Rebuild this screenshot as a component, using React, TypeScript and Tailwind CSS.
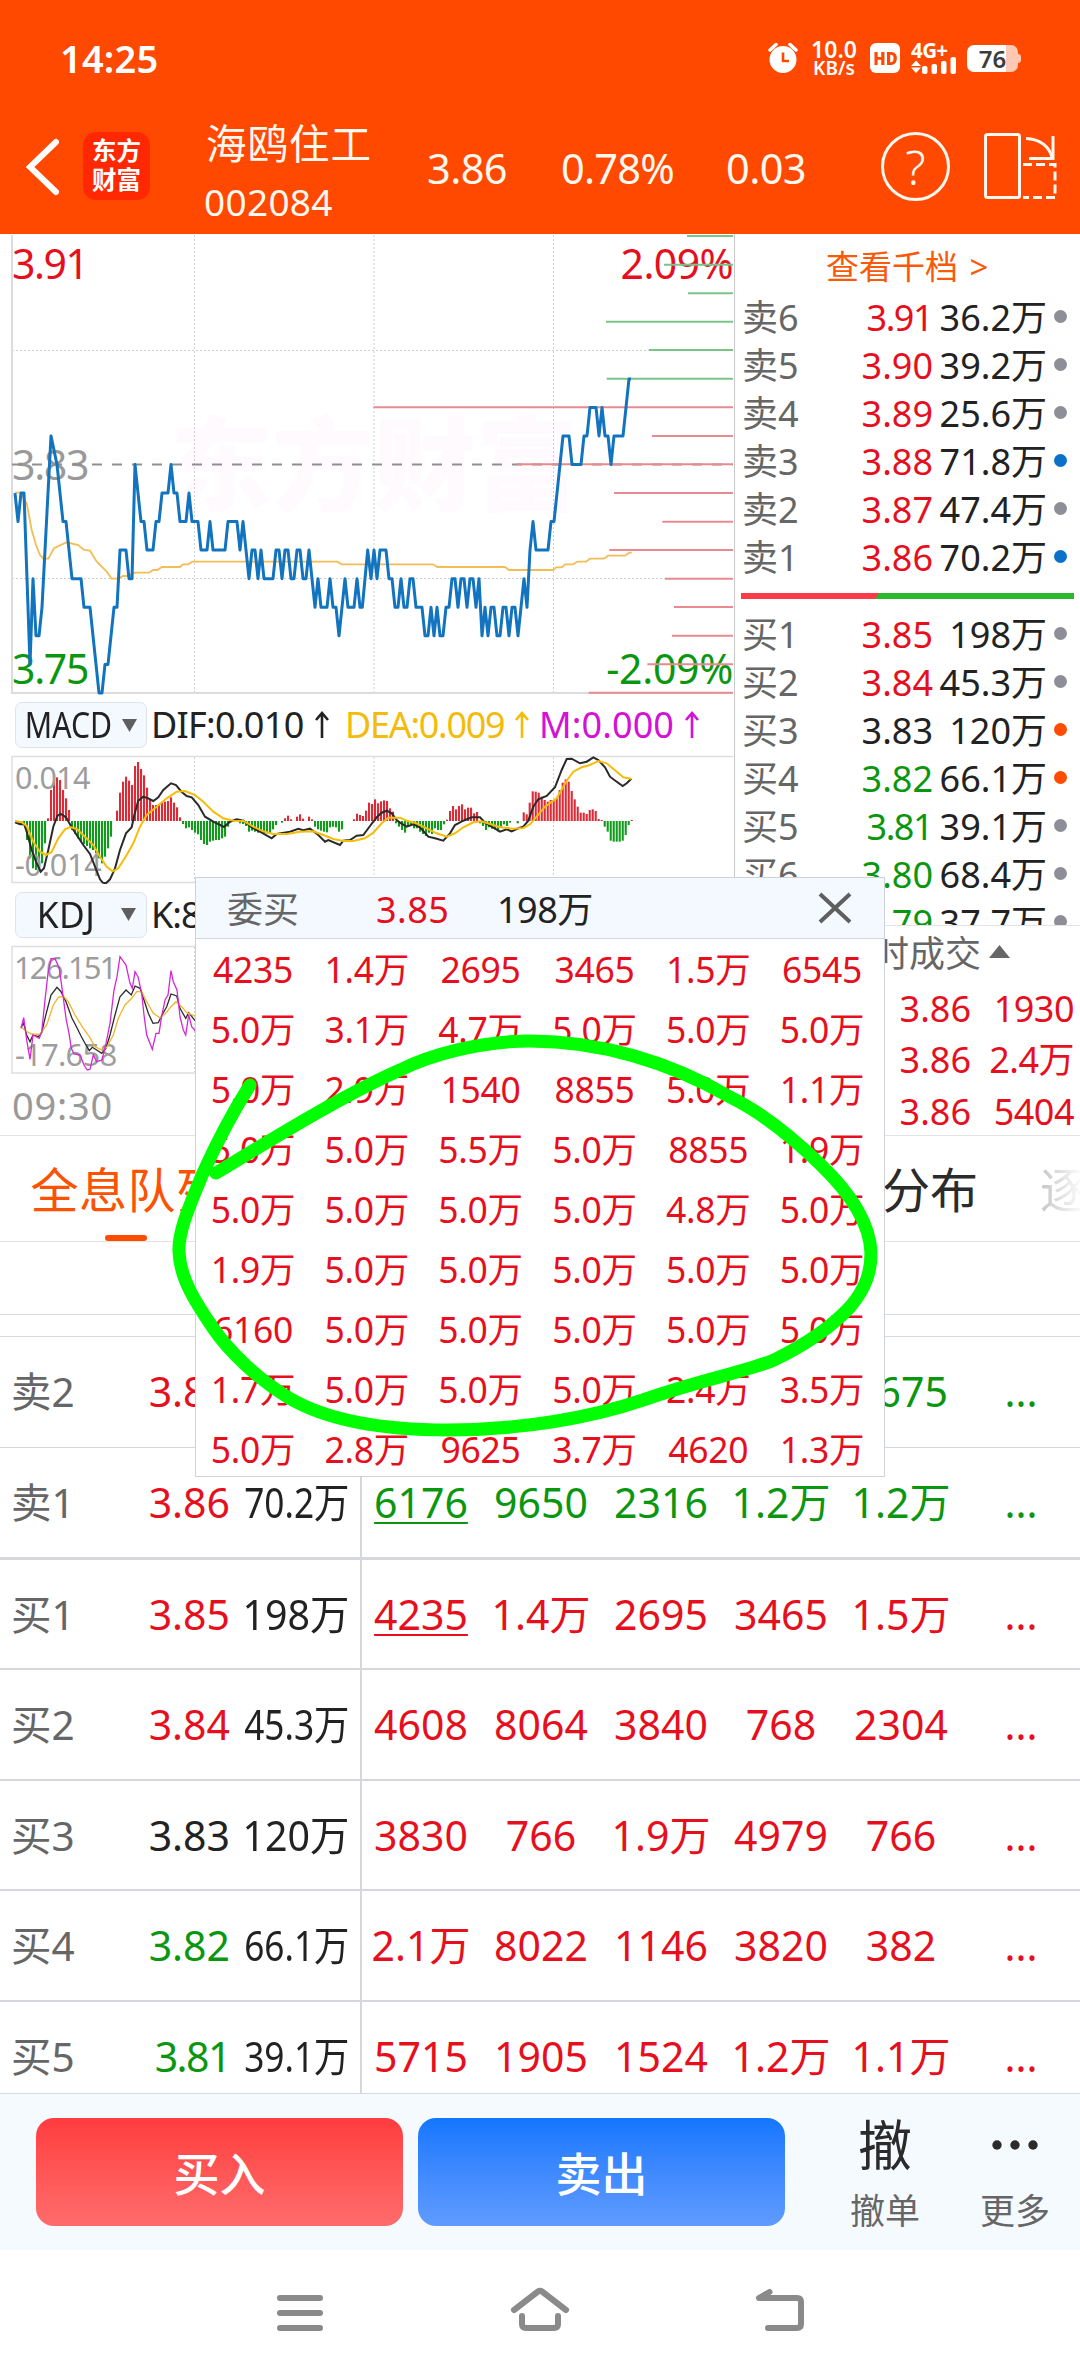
import React from "react";

const RED = "text-[#e60f1e]";
const GREEN = "text-[#0a970f]";
const DARK = "text-[#222222]";
const FONT = "font-['Noto_Sans','Noto_Sans_CJK_SC',sans-serif]";

/* ---------- chart data: x in thirds of a pixel, price in cents above 3.00 ---------- */
const price: [number, number][] = [
  [45, 82], [54, 81], [63, 82], [72, 82], [81, 79], [90, 76], [99, 79], [108, 77], [117, 77], [126, 78], [153, 84],
  [171, 83], [189, 81], [198, 81], [216, 79], [243, 79], [252, 78], [270, 78], [279, 77], [288, 76], [297, 75],
  [306, 75], [315, 76], [324, 76], [342, 78], [351, 78], [360, 80], [378, 80], [387, 79], [396, 79], [405, 83],
  [414, 82], [423, 81], [432, 81], [441, 80], [459, 80], [468, 81], [477, 81], [486, 82], [504, 82], [513, 83],
  [522, 82], [531, 82], [540, 81], [558, 81], [567, 82], [576, 81], [594, 81], [603, 80], [621, 80], [630, 81],
  [639, 80], [675, 80], [684, 81], [711, 81], [720, 80], [729, 81], [738, 80], [747, 79], [756, 80], [765, 80],
  [774, 79], [783, 80], [792, 79], [819, 79], [828, 80], [837, 80], [846, 79], [855, 80], [864, 80], [873, 79],
  [882, 79], [891, 80], [900, 80], [909, 79], [918, 79], [927, 80], [945, 78], [954, 79], [963, 78], [981, 78],
  [990, 79], [999, 78], [1008, 78], [1017, 77], [1035, 79], [1044, 78], [1062, 78], [1071, 79], [1080, 78],
  [1087, 78], [1103, 80], [1113, 79], [1122, 80], [1131, 79], [1140, 80], [1158, 80], [1167, 79], [1176, 79],
  [1185, 78], [1194, 78], [1203, 79], [1212, 78], [1221, 78], [1230, 79], [1239, 79], [1248, 78], [1266, 78],
  [1275, 77], [1284, 77], [1293, 78], [1302, 77], [1311, 78], [1320, 77], [1329, 77], [1338, 78], [1347, 78],
  [1356, 79], [1365, 79], [1374, 78], [1383, 79], [1392, 79], [1401, 78], [1410, 79], [1419, 79], [1428, 78],
  [1437, 79], [1446, 77], [1455, 78], [1464, 77], [1473, 78], [1482, 78], [1491, 77], [1500, 77], [1509, 78],
  [1518, 78], [1527, 77], [1536, 78], [1545, 78], [1554, 77], [1572, 79], [1581, 78], [1590, 80], [1599, 81],
  [1608, 80], [1644, 80], [1653, 81], [1662, 81], [1671, 82], [1680, 83], [1689, 84], [1707, 84], [1716, 83],
  [1743, 83], [1752, 84], [1761, 84], [1770, 85], [1788, 85], [1797, 84], [1806, 85], [1815, 84], [1824, 84],
  [1833, 83], [1842, 84], [1869, 84], [1887, 86], [1893, 86],
];

const average: [number, number][] = [
  [45, 788], [60, 788], [80, 820], [95, 900], [108, 945], [120, 975], [130, 986], [145, 986], [162, 955], [200, 937],
  [235, 945], [252, 960], [270, 962], [290, 995], [320, 1025], [335, 1046], [352, 1046], [370, 1038], [385, 1038],
  [405, 1028], [447, 1028], [460, 1020], [472, 1020], [486, 1011], [540, 1011], [549, 1003], [565, 1003], [577, 995],
  [1012, 995], [1025, 1003], [1300, 1003], [1312, 1011], [1515, 1011], [1527, 1020], [1660, 1020], [1668, 1012],
  [1685, 1012], [1696, 1003], [1720, 1003], [1732, 995], [1758, 995], [1770, 986], [1812, 986], [1824, 977],
  [1875, 977], [1888, 968], [1895, 968],
];

const depth: [number, number, boolean][] = [
  [18, 981, true], [104, 912, true], [190, 984, true], [275, 738, true], [360, 867, true], [446, 740, true],
  [532, 40, false], [618, 876, false], [703, 470, false], [789, 762, false], [875, 907, false], [960, 748, false],
  [1046, 915, false], [1131, 942, false], [1217, 936, false], [1303, 862, false], [1388, 686, false],
];

const macdBars: [number, number[]][] = [
  [54, [400, 402, 405, 450, 505, 535, 540, 545, 520, 460, 385, 300, 270, 262, 270, 300, 325, 360, 420, 432, 445, 455,
    462, 468, 475, 480, 490, 505, 520, 500, 475, 440]],
  [351, [362, 308, 275, 260, 272, 285, 228, 216, 237, 256, 293, 330, 345, 345, 342, 335, 335, 333, 322, 338, 352, 382,
    402, 415, 412, 420, 428, 433, 450, 462, 465, 455, 452, 450, 450, 445, 440, 410]],
  [711, [390, 400, 402, 408, 425, 422, 425, 428, 425, 430, 430, 428, 418, 405]],
  [846, [398, 385, 377, 388]],
  [891, [380, 373, 386]],
  [927, [380, 388, 410, 418, 422, 425, 427, 412, 410, 412, 425, 418]],
  [1062, [388, 371, 375, 378, 362, 338, 342, 328, 340, 334, 331, 333, 355, 365, 400, 410, 420, 428, 410, 407, 415, 415,
    425, 432, 438, 428, 432, 415, 420, 420, 403, 389, 363, 348, 358, 348, 343, 358, 353, 353, 370, 366, 400, 408, 420,
    412, 416, 418, 424, 410, 403, 408, 398]],
  [1553, [400]],
  [1571, [367, 373, 338, 304, 305, 308, 320, 330, 335, 330, 330, 325, 300, 278, 268, 275, 303, 328, 350, 368, 368, 372,
    360, 358, 363, 387, 390, 410, 425, 452, 455, 455, 455, 452, 435, 405, 390]],
];

const dif: [number, number][] = [
  [45, 397], [60, 403], [72, 402], [80, 425], [95, 480], [108, 515], [122, 545], [132, 535], [145, 480], [160, 410],
  [172, 378], [182, 372], [198, 382], [215, 412], [230, 435], [250, 465], [270, 492], [285, 530], [300, 568],
  [308, 578], [318, 580], [330, 568], [345, 535], [360, 480], [378, 430], [395, 412], [403, 375], [415, 332],
  [430, 320], [445, 325], [460, 333], [475, 322], [490, 300], [513, 280], [528, 285], [545, 306], [560, 318],
  [575, 322], [595, 345], [615, 380], [640, 395], [672, 411], [690, 395], [710, 388], [730, 392], [755, 412],
  [785, 428], [815, 445], [830, 432], [870, 425], [895, 416], [910, 421], [930, 416], [955, 435], [975, 455],
  [985, 450], [1020, 465], [1030, 452], [1050, 450], [1070, 437], [1090, 435], [1110, 408], [1130, 382], [1145, 368],
  [1160, 362], [1175, 370], [1190, 390], [1200, 398], [1220, 410], [1240, 403], [1260, 412], [1285, 440],
  [1305, 445], [1330, 452], [1350, 430], [1365, 405], [1390, 392], [1415, 382], [1440, 382], [1455, 398],
  [1475, 410], [1500, 425], [1520, 418], [1535, 424], [1555, 415], [1570, 410], [1585, 392], [1600, 350],
  [1615, 328], [1640, 318], [1665, 292], [1685, 240], [1700, 207], [1715, 206], [1740, 220], [1760, 215],
  [1780, 202], [1795, 210], [1815, 232], [1830, 260], [1850, 275], [1868, 288], [1880, 280], [1894, 266],
];

const dea: [number, number][] = [
  [45, 393], [65, 397], [80, 408], [100, 455], [120, 485], [138, 495], [155, 485], [175, 445], [195, 418], [210, 411],
  [230, 417], [255, 440], [280, 465], [300, 500], [320, 530], [338, 544], [355, 535], [380, 495], [400, 460],
  [420, 410], [440, 375], [470, 350], [500, 325], [530, 305], [555, 303], [585, 315], [610, 335], [640, 365],
  [670, 385], [700, 392], [730, 393], [760, 410], [790, 424], [820, 432], [860, 432], [900, 425], [940, 424],
  [970, 435], [1000, 447], [1030, 453], [1060, 453], [1095, 445], [1120, 428], [1145, 400], [1165, 383], [1200, 383],
  [1220, 392], [1245, 398], [1280, 415], [1310, 430], [1340, 440], [1365, 430], [1390, 412], [1420, 397],
  [1445, 394], [1470, 402], [1500, 412], [1540, 416], [1570, 414], [1590, 403], [1610, 380], [1635, 350],
  [1670, 325], [1700, 272], [1720, 245], [1745, 232], [1770, 225], [1795, 213], [1820, 220], [1850, 245],
  [1870, 262], [1894, 266],
];

const kdjJ: [number, number][] = [
  [63, 1015], [71, 983], [80, 1050], [90, 1108], [99, 1035], [118, 1045], [125, 1025], [135, 930], [144, 850],
  [153, 806], [165, 806], [178, 835], [188, 910], [198, 985], [207, 1030], [214, 1075], [222, 1092], [240, 1095],
  [252, 1125], [262, 1140], [270, 1138], [280, 1095], [290, 1115], [306, 1110], [318, 1060], [330, 1000], [342, 900],
  [351, 860], [360, 800], [378, 825], [390, 880], [397, 895], [405, 845], [414, 860], [425, 910], [432, 975],
  [440, 1035], [457, 1078], [468, 1030], [477, 1030], [484, 985], [495, 930], [504, 915], [513, 842], [520, 875],
  [531, 900], [540, 980], [550, 1020], [557, 1035], [566, 975], [575, 1010], [590, 1028],
];
const kdjK: [number, number][] = [
  [63, 1012], [71, 1000], [80, 1035], [90, 1055], [99, 1035], [115, 1040], [125, 1028], [135, 985], [144, 950],
  [153, 915], [171, 892], [183, 905], [198, 935], [207, 960], [216, 985], [230, 1012], [243, 1038], [255, 1060],
  [268, 1082], [277, 1072], [290, 1080], [305, 1090], [318, 1075], [330, 1035], [345, 975], [360, 920], [378, 900],
  [394, 915], [405, 888], [420, 895], [432, 930], [445, 970], [459, 1000], [475, 998], [486, 975], [500, 950],
  [513, 912], [530, 918], [540, 955], [557, 985], [566, 968], [590, 998],
];
const kdjD: [number, number][] = [
  [63, 1010], [80, 1025], [95, 1032], [120, 1033], [140, 1005], [160, 945], [175, 922], [190, 918], [205, 935],
  [225, 975], [250, 1015], [268, 1040], [285, 1070], [305, 1080], [320, 1072], [340, 1035], [355, 985], [375, 945],
  [395, 925], [410, 905], [425, 905], [440, 935], [460, 970], [480, 983], [495, 972], [513, 950], [528, 935],
  [545, 950], [560, 968], [590, 980],
];

const line = (pts: [number, number][], base: number) =>
  pts.map(([x, y]) => `${(x / 3).toFixed(1)},${(base + y / 3).toFixed(1)}`).join(" ");

/* ---------- header ---------- */
function StatusBar() {
  return (
    <div className="flex h-[116px] items-center pl-[60px] text-white">
      <span className="w-[708px] text-[38px] leading-[44px] font-semibold tracking-[0.2px]">14:25</span>
      <svg width="30" height="32" viewBox="0 0 30 32" className="shrink-0">
        <circle cx="15" cy="17.5" r="13.5" fill="#fff" />
        <path d="M2 8 L8 2.5 M28 8 L22 2.5" stroke="#fff" strokeWidth="3.5" strokeLinecap="round" />
        <path d="M15 10.5 V19 H21" fill="none" stroke="#ff4800" strokeWidth="2.6" />
      </svg>
      <div className="ml-[11px] flex w-[50px] flex-col items-center font-semibold">
        <span className="text-[23px] leading-[20px]">10.0</span>
        <span className="text-[19px] leading-[18px]">KB/s</span>
      </div>
      <div className="ml-[11px] flex h-[30px] w-[30px] items-center justify-center rounded-[6px] bg-white">
        <span className="scale-x-90 text-[18px] leading-[30px] font-black text-[#ff4800]">HD</span>
      </div>
      <svg width="46" height="34" viewBox="911 41 46 34" className="ml-[11px] shrink-0">
        <text x="911" y="58" fontSize="20.500" fontWeight="700" fill="#fff" letterSpacing="-0.6">
          4G+
        </text>
        <path d="M911 66 L916 60.5 L921 66 Z M911 67.500 L916 73 L921 67.500 Z" fill="#fff" />
        <rect x="922" y="66" width="5.500" height="8" rx="2" fill="#fff" />
        <rect x="931.500" y="64" width="5.500" height="10" rx="2" fill="#fff" />
        <rect x="941" y="61" width="5.500" height="13" rx="2" fill="#fff" />
        <rect x="950.500" y="57" width="5.500" height="17" rx="2" fill="#fff" />
      </svg>
      <div className="ml-[10px] flex items-center">
        <div className="flex h-[27px] w-[51px] items-center justify-center rounded-[7px] bg-[linear-gradient(90deg,#fff_76%,#ffc8b3_76%)]">
          <span className="text-[24px] leading-[27px] font-semibold text-[#3c3c3c]">76</span>
        </div>
        <div className="h-[9px] w-[3px] rounded-r-[3px] bg-[#ffc8b3]" />
      </div>
    </div>
  );
}

function TitleBar() {
  return (
    <div className="flex h-[118px] text-[#fff8ee]">
      <svg width="36" height="60" viewBox="0 0 36 60" className="mt-[21px] ml-[26px] shrink-0">
        <path d="M30 5 L4 30 L30 55" fill="none" stroke="#fff" strokeWidth="6" strokeLinecap="round" />
      </svg>
      <div className="mt-[16px] ml-[21px] flex h-[68px] w-[67px] shrink-0 flex-col items-center justify-center rounded-[13px] bg-[#ff2803] text-[24.5px] leading-[29px] font-bold text-white">
        <span className="-mt-[3px]">东方</span>
        <span>财富</span>
      </div>
      <div className="ml-[56px] flex w-[223px] shrink-0 flex-col">
        <span className="mt-[1px] text-[40.5px] leading-[54px] tracking-[1px]">海鸥住工</span>
        <span className="mt-[5px] -ml-[2px] text-[37px] leading-[52px] tracking-[0.3px]">002084</span>
      </div>
      <span className="mt-[26px] -ml-[2px] w-[134px] shrink-0 text-[41.5px] leading-[52px] tracking-[-0.6px]">3.86</span>
      <span className="mt-[26px] w-[165px] shrink-0 text-[41.5px] leading-[52px] tracking-[-0.8px]">0.78%</span>
      <span className="mt-[26px] w-[155px] shrink-0 text-[41.5px] leading-[52px] tracking-[-0.6px]">0.03</span>
      <div className="mt-[16px] flex h-[69px] w-[69px] shrink-0 items-center justify-center rounded-full border-[3px] border-[#fff8ee] text-[48px] leading-[60px] font-light">
        ?
      </div>
      <svg width="75" height="70" viewBox="981 132 75 70" className="mt-[16px] ml-[33px] shrink-0">
        <g fill="none" stroke="#fff8ee" strokeWidth="3">
          <rect x="983.500" y="134.500" width="34" height="63" rx="2" />
          <path d="M1024 138.500 C1038 139 1048 147 1050 158" />
          <path d="M1051 136 V158.500 H1027" />
          <path d="M1021 164.500 H1053 V197.500 H1021" strokeDasharray="9 4" />
        </g>
      </svg>
    </div>
  );
}

/* ---------- charts ---------- */
function PriceChart() {
  const py = (c: number) => 464.5 - (c - 83) * 28.55;
  return (
    <svg width="733" height="461" viewBox="0 234 733 461" className={`block shrink-0 ${FONT}`}>
      <text x="170" y="503" fontSize="102" fontWeight="900" fill="#fefafe">东方财富</text>
      <g stroke="#cfcfcf" strokeWidth="1" strokeDasharray="2 2">
        <path d="M194.500 235 V692 M374 235 V692 M553.500 235 V692 M12 350.500 H733 M12 578.500 H733" />
      </g>
      <path d="M12 235 V693 H733" fill="none" stroke="#dcdcdc" strokeWidth="2" />
      <text x="12" y="279" fontSize="41" fill="#e60f1e" letterSpacing="-1.5">3.91</text>
      <text x="12" y="480" fontSize="41" fill="#999" letterSpacing="-1.3">3.83</text>
      <text x="12" y="684" fontSize="41" fill="#0a970f" letterSpacing="-1.3">3.75</text>
      <text x="733" y="279" fontSize="41" textAnchor="end" fill="#e60f1e" letterSpacing="-0.6">2.09%</text>
      <text x="733" y="684" fontSize="41" textAnchor="end" fill="#0a970f" letterSpacing="-0.3">-2.09%</text>
      <path d="M12 464.500 H733" stroke="#8f8f8f" strokeWidth="2" strokeDasharray="10 10" />
      {depth.map(([y, x, sell]) => (
        <path key={y} d={`M${360 + x / 3} ${230 + y / 3} H733`} stroke={sell ? "#79c487" : "#e88a90"} strokeWidth="2" />
      ))}
      <polyline points={line(average, 230)} fill="none" stroke="#f3bd55" strokeWidth="1.800" />
      <polyline
        points={price.map(([x, c]) => `${(x / 3).toFixed(1)},${py(c).toFixed(1)}`).join(" ")}
        fill="none"
        stroke="#1273be"
        strokeWidth="3"
        strokeLinejoin="round"
      />
    </svg>
  );
}

function MacdChart() {
  return (
    <svg width="733" height="129" viewBox="0 755 733 129" className={`block shrink-0 ${FONT}`}>
      <path d="M194.500 757 V882 M374 757 V882 M553.500 757 V882" stroke="#cfcfcf" strokeDasharray="2 2" />
      <path d="M733 756.500 H12 V882.500 H733" fill="none" stroke="#dedede" strokeWidth="1.500" />
      {macdBars.flatMap(([start, tops]) =>
        tops.map((v, i) => {
          const y = 690 + v / 3;
          const up = v < 393;
          return (
            <rect
              key={`${start}-${i}`}
              x={(start + i * 9) / 3 - 1}
              y={up ? y : 821}
              width="2.100"
              height={Math.max(1, Math.abs(y - 821))}
              fill={up ? "#dc2a36" : "#129a1c"}
            />
          );
        })
      )}
      <text x="15" y="789" fontSize="30.500" fill="#9d9d9d" letterSpacing="-0.6">0.014</text>
      <text x="15" y="876" fontSize="30.500" fill="#9d9d9d" letterSpacing="-0.2">-0.014</text>
      <polyline points={line(dif, 690)} fill="none" stroke="#2a2a2a" strokeWidth="2" />
      <polyline points={line(dea, 690)} fill="none" stroke="#f5bd08" strokeWidth="2" />
    </svg>
  );
}

function KdjChart() {
  return (
    <svg width="733" height="130" viewBox="0 945 733 130" className={`block shrink-0 ${FONT}`}>
      <path d="M194.500 947 V1072" stroke="#cfcfcf" strokeDasharray="2 2" />
      <path d="M733 946.500 H12 V1073 H733" fill="none" stroke="#dedede" strokeWidth="1.500" />
      <text x="14" y="979" fontSize="31" fill="#9d9d9d" letterSpacing="-1.9">126.151</text>
      <text x="15" y="1066" fontSize="31" fill="#9d9d9d" letterSpacing="-0.8">-17.658</text>
      <polyline points={line(kdjK, 690)} fill="none" stroke="#2a2a2a" strokeWidth="1.300" />
      <polyline points={line(kdjD, 690)} fill="none" stroke="#f0b52a" strokeWidth="1.300" />
      <polyline points={line(kdjJ, 690)} fill="none" stroke="#d428d8" strokeWidth="1.300" />
    </svg>
  );
}

function IndicatorPicker({ name, label }: { name: string; label: string }) {
  return (
    <div className="ml-[15px] flex h-[46px] w-[132px] shrink-0 items-center rounded-[7px] border border-[#dfe4ea] bg-[#f4f9ff] text-[36px] leading-[44px] text-[#222]">
      <span className={`flex w-[107px] justify-center ${label}`}>{name}</span>
      <svg width="15" height="13" viewBox="0 0 15 13">
        <path d="M0 0 H15 L7.500 13 Z" fill="#5f5f5f" />
      </svg>
    </div>
  );
}

function UpArrow() {
  return (
    <svg width="14" height="28" viewBox="0 0 14 28" className="ml-[11px] shrink-0">
      <path d="M7 27 V2 M1 9 L7 2 L13 9" fill="none" stroke="currentColor" strokeWidth="2.600" />
    </svg>
  );
}

function ChartColumn() {
  return (
    <div className="flex w-[735px] shrink-0 flex-col overflow-hidden border-r border-[#c9c9c9]">
      <PriceChart />
      <div className="flex h-[60px] shrink-0 items-center text-[36px] leading-[44px] whitespace-nowrap">
        <IndicatorPicker name="MACD" label="scale-x-[0.84] -ml-[1px]" />
        <span className="ml-[4px] flex w-[194px] items-center text-[#222]">
          <span className="tracking-[-0.7px]">DIF:0.010</span>
          <UpArrow />
        </span>
        <span className="flex w-[194px] items-center text-[#f3bb0c]">
          <span className="tracking-[-1.3px]">DEA:0.009</span>
          <UpArrow />
        </span>
        <span className="flex items-center text-[#d411d4]">
          <span className="tracking-[0.1px]">M:0.000</span>
          <UpArrow />
        </span>
      </div>
      <MacdChart />
      <div className="flex h-[61px] shrink-0 items-center text-[36px] leading-[44px]">
        <IndicatorPicker name="KDJ" label="scale-x-[0.98] tracking-[0.5px] -ml-[2px] pr-[3px]" />
        <span className="ml-[4px] tracking-[-1px] text-[#222]">K:8</span>
      </div>
      <KdjChart />
      <span className="mt-[5px] ml-[12px] text-[38px] leading-[50px] tracking-[0.8px] text-[#999]">09:30</span>
    </div>
  );
}

/* ---------- order book ---------- */
type Quote = [string, string, string, string, string];
const asks: Quote[] = [
  ["卖6", "3.91", "36.2万", RED, "bg-[#8e8e96]"],
  ["卖5", "3.90", "39.2万", RED, "bg-[#8e8e96]"],
  ["卖4", "3.89", "25.6万", RED, "bg-[#8e8e96]"],
  ["卖3", "3.88", "71.8万", RED, "bg-[#0a70c8]"],
  ["卖2", "3.87", "47.4万", RED, "bg-[#8e8e96]"],
  ["卖1", "3.86", "70.2万", RED, "bg-[#0a70c8]"],
];
const bids: Quote[] = [
  ["买1", "3.85", "198万", RED, "bg-[#8e8e96]"],
  ["买2", "3.84", "45.3万", RED, "bg-[#8e8e96]"],
  ["买3", "3.83", "120万", DARK, "bg-[#ff4b00]"],
  ["买4", "3.82", "66.1万", GREEN, "bg-[#ff4b00]"],
  ["买5", "3.81", "39.1万", GREEN, "bg-[#8e8e96]"],
  ["买6", "3.80", "68.4万", GREEN, "bg-[#8e8e96]"],
  ["买7", "3.79", "37.7万", GREEN, "bg-[#8e8e96]"],
];

function QuoteRow({ q }: { q: Quote }) {
  const narrow = q[1].endsWith("1") ? "tracking-[-1.5px] pr-[1px]" : "";
  return (
    <div className="flex h-[48px] shrink-0 items-center text-[36px] leading-[48px] whitespace-nowrap">
      <span className="mt-[2px] w-[90px] pl-[7px] text-[36px] text-[#666]">{q[0]}</span>
      <span className={`mt-[2px] w-[108px] text-right ${q[3]} ${narrow}`}>{q[1]}</span>
      <span className={`mt-[2px] w-[114px] text-right ${DARK}`}>{q[2]}</span>
      <span className={`mb-[1px] ml-[7px] h-[13px] w-[13px] rounded-full ${q[4]}`} />
    </div>
  );
}

function BookColumn() {
  return (
    <div className="flex h-[901px] w-[345px] flex-col overflow-hidden">
      <div className="flex h-[59px] shrink-0 items-center pt-[7px] pl-[91px] text-[33px] leading-[48px] text-[#f95a0a]">
        查看千档 <span className="ml-[3px]">&nbsp;&gt;</span>
      </div>
      {asks.map((q) => <QuoteRow key={q[0]} q={q} />)}
      <div className="mx-[6px] flex h-[29px] shrink-0 items-center">
        <div className="h-[6px] w-full bg-[linear-gradient(125deg,#fb3c48_41%,#2bb92b_41%)]" />
      </div>
      <div className="flex h-[315px] shrink-0 flex-col overflow-hidden">
        {bids.map((q) => <QuoteRow key={q[0]} q={q} />)}
      </div>
      <div className="flex h-[57px] shrink-0 items-center border-t border-[#e3e3e3] pl-[102px] text-[36px] leading-[48px] text-[#666]">
        分时成交
        <svg width="21" height="13" viewBox="0 0 21 13" className="mb-[5px] ml-[8px]">
          <path d="M0 13 H21 L10.500 0 Z" fill="#666" />
        </svg>
      </div>
      {["1930", "2.4万", "5404"].map((v) => (
        <div key={v} className={`flex h-[51.5px] shrink-0 items-center pt-[2px] text-[36px] leading-[50px] ${RED}`}>
          <span className="w-[236px] text-right">3.86</span>
          <span className="w-[103px] text-right tracking-[-0.5px]">{v}</span>
        </div>
      ))}
    </div>
  );
}

/* ---------- tabs and queue table ---------- */
function Tabs() {
  return (
    <div className="flex h-[107px] border-t border-b border-[#e3e3e3] text-[48px] leading-[60px]">
      <div className="flex w-[252px] flex-col items-center pt-[24px] text-[#fb5203]">
        <span className="pl-[3px] tracking-[0.5px]">全息队列</span>
        <span className="mt-[15px] h-[6px] w-[42px] rounded-full bg-[#ff4b00]" />
      </div>
      <span className="mt-[24px] ml-[534px] whitespace-nowrap text-[#2b2b2b]">成交分布</span>
      <span className="mt-[24px] ml-[62px] w-[40px] overflow-hidden bg-[linear-gradient(90deg,#c4c4c4,#fafafa)] bg-clip-text whitespace-nowrap text-transparent">
        逐笔
      </span>
    </div>
  );
}

type QueueRow = { side: string; price: string; vol: string; color: string; qColor: string; cells: string[]; mark?: boolean; h: string };
const queue: QueueRow[] = [
  { side: "卖2", price: "3.87", vol: "47.4万", color: RED, qColor: GREEN, cells: ["", "", "", "", "4675"], h: "h-[111px] border-b" },
  { side: "卖1", price: "3.86", vol: "70.2万", color: RED, qColor: GREEN, cells: ["6176", "9650", "2316", "1.2万", "1.2万"], mark: true, h: "h-[112px] border-b-[3px]" },
  { side: "买1", price: "3.85", vol: "198万", color: RED, qColor: RED, cells: ["4235", "1.4万", "2695", "3465", "1.5万"], mark: true, h: "h-[110px] border-b-2" },
  { side: "买2", price: "3.84", vol: "45.3万", color: RED, qColor: RED, cells: ["4608", "8064", "3840", "768", "2304"], h: "h-[111px] border-b-2" },
  { side: "买3", price: "3.83", vol: "120万", color: DARK, qColor: RED, cells: ["3830", "766", "1.9万", "4979", "766"], h: "h-[110px] border-b-2" },
  { side: "买4", price: "3.82", vol: "66.1万", color: GREEN, qColor: RED, cells: ["2.1万", "8022", "1146", "3820", "382"], h: "h-[111px] border-b-2" },
  { side: "买5", price: "3.81", vol: "39.1万", color: GREEN, qColor: RED, cells: ["5715", "1905", "1524", "1.2万", "1.1万"], h: "h-[92px] border-b" },
];

function QueueTable() {
  return (
    <div className="flex flex-col">
      <div className="h-[73px] border-b border-[#d8d9dd]" />
      <div className="h-[22px] border-b border-[#d8d9dd]" />
      {queue.map((r) => (
        <div key={r.side} className={`flex overflow-hidden border-[#d6d7dc] text-[41px] leading-[109px] whitespace-nowrap ${r.h}`}>
          <div className="flex h-full w-[362px] shrink-0 border-r-2 border-[#d6d7dc]">
            <span className="w-[110px] pl-[11px] text-[40.5px] text-[#666]">{r.side}</span>
            <span className={`w-[120px] text-right ${r.price.endsWith("1") ? "tracking-[-1.5px]" : ""} ${r.color}`}>{r.price}</span>
            <span className={`w-[119px] text-right ${DARK}`}>
              <span className={`inline-block origin-right ${r.vol.length > 4 ? "scale-x-[0.86] -ml-[20px]" : "scale-x-[0.96]"}`}>{r.vol}</span>
            </span>
          </div>
          <div className={`-ml-[1px] grid h-[109px] w-[720px] shrink-0 grid-cols-6 text-center ${r.qColor}`}>
            {r.cells.map((c, i) => (
              <span key={i} className={r.mark && i === 0 ? "underline decoration-2 underline-offset-[4px]" : ""}>{c}</span>
            ))}
            <span>...</span>
          </div>
        </div>
      ))}
    </div>
  );
}

/* ---------- popup with the full queue ---------- */
const popupCells = [
  "4235", "1.4万", "2695", "3465", "1.5万", "6545",
  "5.0万", "3.1万", "4.7万", "5.0万", "5.0万", "5.0万",
  "5.0万", "2.9万", "1540", "8855", "5.0万", "1.1万",
  "5.0万", "5.0万", "5.5万", "5.0万", "8855", "1.9万",
  "5.0万", "5.0万", "5.0万", "5.0万", "4.8万", "5.0万",
  "1.9万", "5.0万", "5.0万", "5.0万", "5.0万", "5.0万",
  "6160", "5.0万", "5.0万", "5.0万", "5.0万", "5.0万",
  "1.7万", "5.0万", "5.0万", "5.0万", "2.4万", "3.5万",
  "5.0万", "2.8万", "9625", "3.7万", "4620", "1.3万",
];

function Popup() {
  return (
    <div className="absolute top-[877px] left-[195px] h-[600px] w-[690px] border border-[#cdd1d8] bg-white text-[35.5px]">
      <div className="flex h-[61px] items-center border-b border-[#d3d6dc] bg-[#f4f9ff] pt-[4px] text-[36px] leading-[48px]">
        <span className="w-[180px] pl-[31px] text-[#666]">委买</span>
        <span className={`w-[121px] tracking-[0.5px] ${RED}`}>3.85</span>
        <span className={`w-[321px] tracking-[-0.5px] ${DARK}`}>198万</span>
        <svg width="34" height="32" viewBox="0 0 34 32" className="mb-[4px]">
          <path d="M2 2 L32 30 M32 2 L2 30" stroke="#5f5f5f" strokeWidth="4" />
        </svg>
      </div>
      <div className={`grid grid-cols-6 pr-[5px] text-center leading-[60px] tracking-[-0.3px] ${RED}`}>
        {popupCells.map((c, i) => <span key={i}>{c}</span>)}
      </div>
    </div>
  );
}

function Scribble() {
  return (
    <svg width="1080" height="2376" viewBox="0 0 1080 2376" className="pointer-events-none absolute top-0 left-0">
      <path
        d="M250 1085 C234 1110 217 1142 203 1173 C189 1207 178 1232 179 1252 C180 1280 198 1306 213 1328 C228 1350 256 1378 289 1398 C330 1422 390 1430 448 1430 C520 1430 590 1418 643 1400 C700 1380 745 1372 774 1360 C815 1340 838 1320 850 1307 C867 1287 871 1270 871 1253 C870 1220 845 1188 820 1164 C795 1140 765 1114 730 1097 C670 1062 600 1041 530 1041 C480 1041 430 1055 400 1070 C350 1092 290 1128 216 1173"
        fill="none"
        stroke="#00ff00"
        strokeWidth="13"
        strokeLinecap="round"
        strokeLinejoin="round"
      />
    </svg>
  );
}

/* ---------- bottom bars ---------- */
function ActionBar() {
  return (
    <div className="flex h-[156px] bg-[#f5faff] pt-[24px] pl-[36px] text-[46px] leading-[110px] font-medium text-white">
      <div className="h-[108px] w-[367px] rounded-[18px] bg-linear-to-b from-[#ff3b3e] to-[#ff6b6b] text-center">买入</div>
      <div className="ml-[15px] h-[108px] w-[367px] rounded-[18px] bg-linear-to-b from-[#1276ff] to-[#5f9bff] text-center">卖出</div>
      <div className="ml-[35px] flex w-[130px] flex-col items-center font-normal">
        <span className="-mt-[3px] text-[54px] leading-[60px] text-[#2b2b2b]">撤</span>
        <span className="mt-[12px] text-[35px] leading-[48px] text-[#666]">撤单</span>
      </div>
      <div className="flex w-[130px] flex-col items-center font-normal">
        <svg width="48" height="55" viewBox="0 0 48 55">
          <g fill="#2b2b2b">
            <circle cx="6" cy="27" r="4.700" />
            <circle cx="24" cy="27" r="4.700" />
            <circle cx="42" cy="27" r="4.700" />
          </g>
        </svg>
        <span className="mt-[14px] text-[35px] leading-[48px] text-[#666]">更多</span>
      </div>
    </div>
  );
}

function NavBar() {
  return (
    <div className="flex h-[126px] items-start justify-center gap-[183px] bg-white pt-[30px]">
      <svg width="54" height="64" viewBox="273 2280 54 64">
        <path d="M280 2298 H320 M280 2313 H320 M280 2328 H320" stroke="#8b8a8b" strokeWidth="6" strokeLinecap="round" />
      </svg>
      <svg width="60" height="64" viewBox="510 2280 60 64">
        <path
          d="M514 2310 L538 2291.500 Q540 2290 542 2291.500 L566 2310 M522 2316 V2324 Q522 2328 526 2328 H554 Q558 2328 558 2324 V2316"
          fill="none" stroke="#8b8a8b" strokeWidth="6" strokeLinecap="round" strokeLinejoin="round"
        />
      </svg>
      <svg width="54" height="64" viewBox="753 2280 54 64">
        <path
          d="M769.500 2292 L759 2298 H797 Q801 2298 801 2302 V2324 Q801 2328 797 2328 H768"
          fill="none" stroke="#8b8a8b" strokeWidth="6" strokeLinecap="round" strokeLinejoin="round"
        />
      </svg>
    </div>
  );
}

export default function App() {
  return (
    <div className={`relative flex h-[2376px] w-[1080px] flex-col overflow-hidden bg-white ${FONT}`}>
      <div className="h-[234px] bg-[#ff4800]">
        <StatusBar />
        <TitleBar />
      </div>
      <div className="flex h-[901px]">
        <ChartColumn />
        <BookColumn />
      </div>
      <Tabs />
      <QueueTable />
      <ActionBar />
      <NavBar />
      <Popup />
      <Scribble />
    </div>
  );
}
